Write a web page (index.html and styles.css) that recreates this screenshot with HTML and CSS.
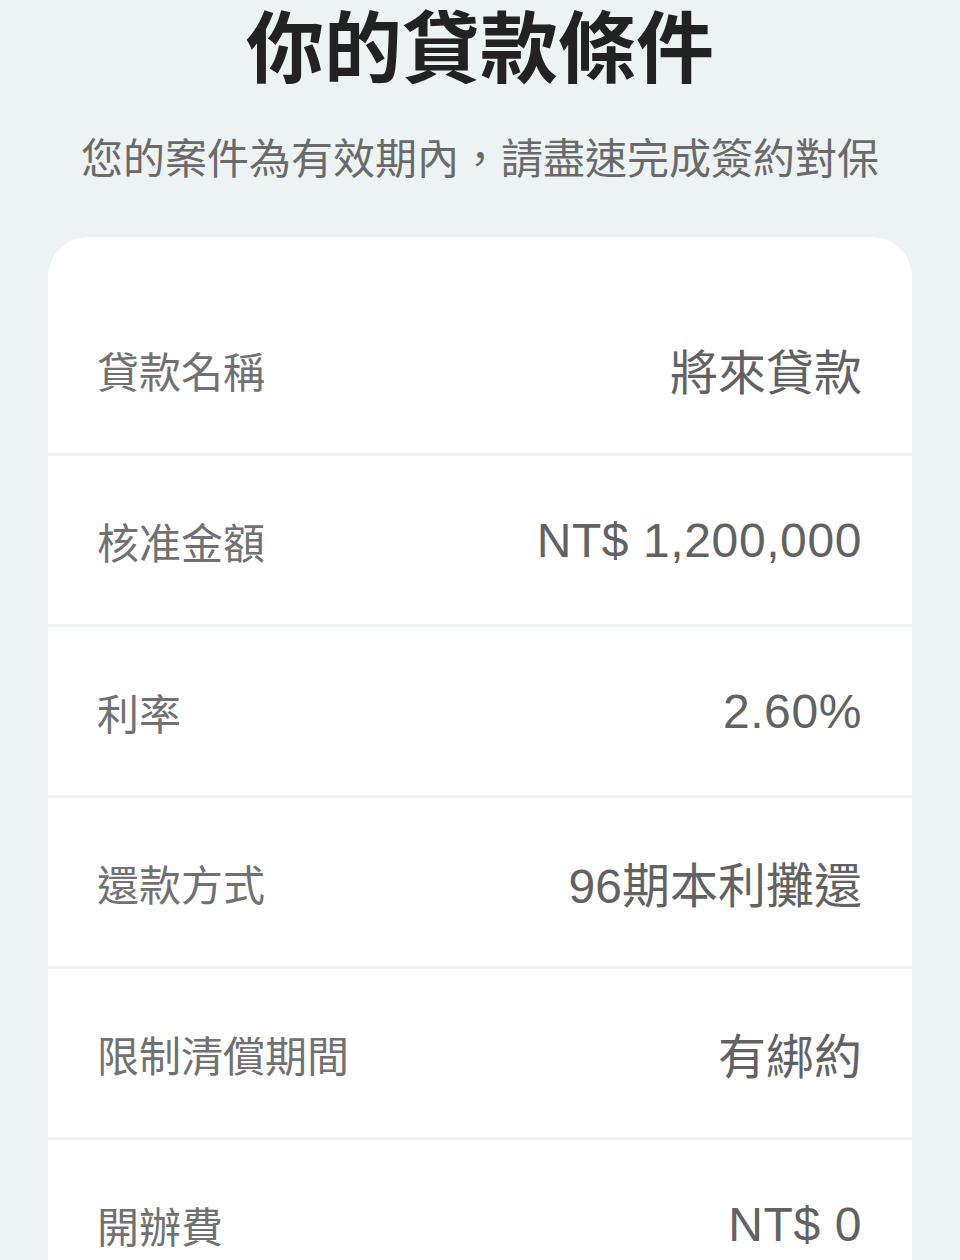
FILE: index.html
```html
<!DOCTYPE html>
<html lang="zh-Hant">
<head>
    <meta charset="UTF-8">
    <meta name="viewport" content="width=device-width, initial-scale=1.0">
    <title>你的貸款條件</title>
    <link rel="stylesheet" href="styles.css">
</head>
<body>
    <h1 class="title">你的貸款條件</h1>
    <p class="subtitle">您的案件為有效期內，請盡速完成簽約對保</p>

    <div class="card">
        <div class="row">
            <span class="label">貸款名稱</span>
            <span class="value">將來貸款</span>
        </div>
        <div class="row">
            <span class="label">核准金額</span>
            <span class="value num">NT$ 1,200,000</span>
        </div>
        <div class="row">
            <span class="label">利率</span>
            <span class="value num">2.60%</span>
        </div>
        <div class="row">
            <span class="label">還款方式</span>
            <span class="value">96期本利攤還</span>
        </div>
        <div class="row">
            <span class="label">限制清償期間</span>
            <span class="value">有綁約</span>
        </div>
        <div class="row">
            <span class="label">開辦費</span>
            <span class="value num">NT$ 0</span>
        </div>
    </div>
</body>
</html>
```

FILE: styles.css
```css
body {
    margin: 0;
    padding: 0;
    background-color: #edf3f3;
    font-family: "Liberation Sans", "Noto Sans CJK TC", sans-serif;
}
.title {
    margin: 0;
    text-align: center;
    font-size: 78px;
    line-height: 100px;
    font-weight: bold;
    color: #222222;
}
.subtitle {
    margin: 35px 0 0;
    text-align: center;
    font-size: 42px;
    line-height: 50px;
    color: #6a6a6a;
}
.card {
    margin: 52px 48px 0;
    padding-top: 48px;
    background-color: #ffffff;
    border-radius: 40px 40px 0 0;
}
.row {
    display: flex;
    justify-content: space-between;
    align-items: center;
    height: 168px;
    padding: 0 50px 0 49px;
    border-bottom: 3px solid #eff2f2;
}
.label {
    font-size: 42px;
    color: #717171;
}
.value {
    font-size: 48px;
    color: #626262;
}
.num {
    letter-spacing: 0.6px;
}
```
